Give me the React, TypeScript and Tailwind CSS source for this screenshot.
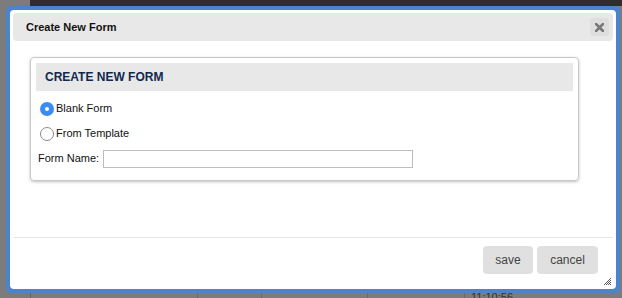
export default function App() {
  return (
    <div className="relative w-[622px] h-[298px] overflow-hidden bg-[#7c7c7c] font-['Liberation_Sans',Arial,sans-serif]">
      {/* page behind the modal */}
      <div className="flex flex-col h-full">
        <div className="h-[6px] ml-[30px] bg-[#2e2e2e]"></div>
        <div className="flex-1"></div>
        <div className="flex h-[9px] text-[11px] text-[#333] leading-none">
          <div className="w-[31px] border-r border-[#666]"></div>
          <div className="w-[167px] border-r border-[#6a6a6a]"></div>
          <div className="w-[64px] border-r border-[#6a6a6a]"></div>
          <div className="w-[106px] border-r border-[#6a6a6a]"></div>
          <div className="w-[97px] border-r border-[#6a6a6a]"></div>
          <div className="pl-[6px] pt-[3px]">11:10:56</div>
        </div>
      </div>

      {/* modal */}
      <div className="absolute left-[6px] top-[6px] w-[614px] h-[287px] rounded-[5px] bg-[#4c83cf] p-[4px]">
        <div className="relative flex flex-col h-full rounded-[4px] bg-white p-[3px]">
          {/* title bar */}
          <div className="flex items-center justify-between h-[28px] rounded-[4px] bg-[#e8e8e8] pl-[13px] pr-[4px]">
            <span className="text-[11px] font-bold text-[#111]">Create New Form</span>
            <button className="flex items-center justify-center w-[19px] h-[18px] rounded-[3px] bg-[#dedede]">
              <svg width="9" height="9" viewBox="0 0 9 9">
                <path d="M1 1 L8 8 M8 1 L1 8" stroke="#777" strokeWidth="2.6" strokeLinecap="square" />
              </svg>
            </button>
          </div>

          {/* body */}
          <div className="flex-1 pt-[16px] pl-[17px] pr-[34px]">
            <div className="rounded-[4px] border border-[#c8c8c8] shadow-[0_1px_3px_rgba(0,0,0,0.25)] px-[5px] pt-[5px] pb-[9px]">
              <div className="flex items-center h-[28px] bg-[#e8e8e8] pl-[9px]">
                <span className="text-[12px] font-bold text-[#12284d]">CREATE NEW FORM</span>
              </div>
              <div className="mt-[5px] text-[11px] text-[#111]">
                <div className="flex items-center h-[25px] pl-[4px]">
                  <span className="flex items-center justify-center w-[14px] h-[14px] rounded-full bg-[#3a8bf4]">
                    <span className="w-[4px] h-[4px] rounded-full bg-white"></span>
                  </span>
                  <span className="ml-[2px]">Blank Form</span>
                </div>
                <div className="flex items-center h-[25px] pl-[4px]">
                  <span className="w-[14px] h-[14px] rounded-full border border-[#8a8a8a] bg-white"></span>
                  <span className="ml-[2px]">From Template</span>
                </div>
                <div className="flex items-center h-[25px] pl-[2px]">
                  <span>Form Name:</span>
                  <input
                    type="text"
                    className="ml-[4px] w-[310px] h-[18px] border border-[#bdbdbd] bg-white outline-none"
                  />
                </div>
              </div>
            </div>
          </div>

          {/* footer */}
          <div className="flex justify-end border-t border-[#e6e6e6] pt-[8px] pb-[12px] pr-[15px] gap-[4px]">
            <button className="w-[50px] h-[28px] rounded-[4px] bg-[#e0e0e0] text-[12px] text-[#444]">save</button>
            <button className="w-[61px] h-[28px] rounded-[4px] bg-[#e0e0e0] text-[12px] text-[#444]">cancel</button>
          </div>

          {/* resize grip */}
          <svg className="absolute right-[5px] bottom-[4px]" width="7" height="7" viewBox="0 0 7 7">
            <path d="M0 7 L7 0 M2 7 L7 2 M4 7 L7 4 M6 7 L7 6" stroke="#444" strokeWidth="0.9" />
          </svg>
        </div>
      </div>
    </div>
  );
}
